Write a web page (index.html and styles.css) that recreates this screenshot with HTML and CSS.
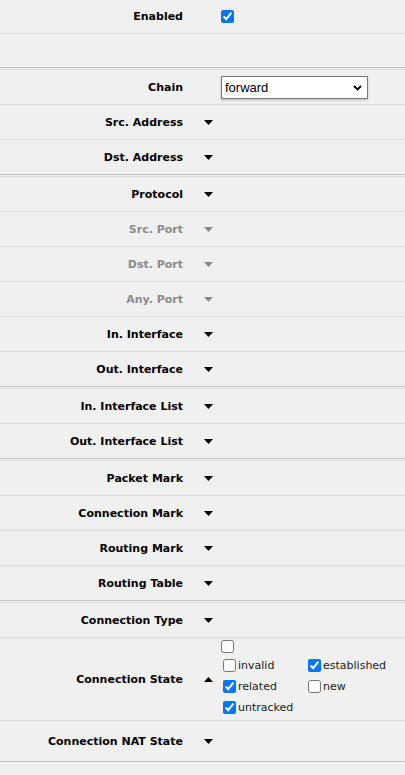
FILE: index.html
```html
<!DOCTYPE html>
<html lang="en">
<head>
    <meta charset="UTF-8">
    <meta name="viewport" content="width=device-width, initial-scale=1.0">
    <title>Firewall Rule</title>
    <link rel="stylesheet" href="styles.css">
</head>
<body>
    <div class="form">
        <div class="group">
            <div class="row row-first">
                <div class="label">Enabled</div>
                <div class="toggle"></div>
                <div class="value"><input type="checkbox" class="check" checked></div>
            </div>
            <div class="row row-empty"></div>
        </div>

        <div class="group">
            <div class="row">
                <div class="label">Chain</div>
                <div class="toggle"></div>
                <div class="value">
                    <div class="select-wrap">
                        <select class="select">
                            <option>forward</option>
                            <option>input</option>
                            <option>output</option>
                        </select>
                        <svg class="chevron" width="9" height="6" viewBox="0 0 9 6"><path d="M1 1 L4.5 4.5 L8 1" fill="none" stroke="#000" stroke-width="1.8"/></svg>
                    </div>
                </div>
            </div>
            <div class="row">
                <div class="label">Src. Address</div>
                <div class="toggle"><svg width="9" height="5" viewBox="0 0 9 5"><polygon points="0,0 9,0 4.5,5"/></svg></div>
            </div>
            <div class="row">
                <div class="label">Dst. Address</div>
                <div class="toggle"><svg width="9" height="5" viewBox="0 0 9 5"><polygon points="0,0 9,0 4.5,5"/></svg></div>
            </div>
        </div>

        <div class="group">
            <div class="row">
                <div class="label">Protocol</div>
                <div class="toggle"><svg width="9" height="5" viewBox="0 0 9 5"><polygon points="0,0 9,0 4.5,5"/></svg></div>
            </div>
            <div class="row disabled">
                <div class="label">Src. Port</div>
                <div class="toggle"><svg width="9" height="5" viewBox="0 0 9 5"><polygon points="0,0 9,0 4.5,5"/></svg></div>
            </div>
            <div class="row disabled">
                <div class="label">Dst. Port</div>
                <div class="toggle"><svg width="9" height="5" viewBox="0 0 9 5"><polygon points="0,0 9,0 4.5,5"/></svg></div>
            </div>
            <div class="row disabled">
                <div class="label">Any. Port</div>
                <div class="toggle"><svg width="9" height="5" viewBox="0 0 9 5"><polygon points="0,0 9,0 4.5,5"/></svg></div>
            </div>
            <div class="row">
                <div class="label">In. Interface</div>
                <div class="toggle"><svg width="9" height="5" viewBox="0 0 9 5"><polygon points="0,0 9,0 4.5,5"/></svg></div>
            </div>
            <div class="row">
                <div class="label">Out. Interface</div>
                <div class="toggle"><svg width="9" height="5" viewBox="0 0 9 5"><polygon points="0,0 9,0 4.5,5"/></svg></div>
            </div>
        </div>

        <div class="group">
            <div class="row">
                <div class="label">In. Interface List</div>
                <div class="toggle"><svg width="9" height="5" viewBox="0 0 9 5"><polygon points="0,0 9,0 4.5,5"/></svg></div>
            </div>
            <div class="row">
                <div class="label">Out. Interface List</div>
                <div class="toggle"><svg width="9" height="5" viewBox="0 0 9 5"><polygon points="0,0 9,0 4.5,5"/></svg></div>
            </div>
        </div>

        <div class="group">
            <div class="row">
                <div class="label">Packet Mark</div>
                <div class="toggle"><svg width="9" height="5" viewBox="0 0 9 5"><polygon points="0,0 9,0 4.5,5"/></svg></div>
            </div>
            <div class="row">
                <div class="label">Connection Mark</div>
                <div class="toggle"><svg width="9" height="5" viewBox="0 0 9 5"><polygon points="0,0 9,0 4.5,5"/></svg></div>
            </div>
            <div class="row">
                <div class="label">Routing Mark</div>
                <div class="toggle"><svg width="9" height="5" viewBox="0 0 9 5"><polygon points="0,0 9,0 4.5,5"/></svg></div>
            </div>
            <div class="row">
                <div class="label">Routing Table</div>
                <div class="toggle"><svg width="9" height="5" viewBox="0 0 9 5"><polygon points="0,0 9,0 4.5,5"/></svg></div>
            </div>
        </div>

        <div class="group">
            <div class="row">
                <div class="label">Connection Type</div>
                <div class="toggle"><svg width="9" height="5" viewBox="0 0 9 5"><polygon points="0,0 9,0 4.5,5"/></svg></div>
            </div>
            <div class="row row-state">
                <div class="label">Connection State</div>
                <div class="toggle"><svg width="9" height="5" viewBox="0 0 9 5"><polygon points="0,5 9,5 4.5,0"/></svg></div>
                <div class="value value-state">
                    <input type="checkbox" class="check check-all">
                    <div class="states">
                        <label class="state"><input type="checkbox"> invalid</label>
                        <label class="state"><input type="checkbox" checked> established</label>
                        <label class="state"><input type="checkbox" checked> related</label>
                        <label class="state"><input type="checkbox"> new</label>
                        <label class="state"><input type="checkbox" checked> untracked</label>
                    </div>
                </div>
            </div>
            <div class="row row-nat">
                <div class="label">Connection NAT State</div>
                <div class="toggle"><svg width="9" height="5" viewBox="0 0 9 5"><polygon points="0,0 9,0 4.5,5"/></svg></div>
            </div>
        </div>
    </div>
</body>
</html>
```

FILE: styles.css
```css
body {
    margin: 0;
    padding: 0;
    background-color: #f0f0f0;
    font-family: 'DejaVu Sans', Verdana, sans-serif;
    color: #000;
    height: 775px;
    overflow: hidden;
}
.group {
    border-bottom: 1px solid #c4c4c4;
}
.group + .group {
    margin-top: 1px;
    border-top: 1px solid #dcdcdc;
}
.row {
    display: flex;
    align-items: center;
    height: 34px;
    border-bottom: 1px solid #dcdcdc;
}
.row:last-child {
    border-bottom: none;
}
.row-first, .row-empty {
    height: 33px;
}
.row-state {
    height: 82px;
}
.row-nat {
    height: 40px;
}
.label {
    width: 183px;
    flex: none;
    text-align: right;
    font-size: 11px;
    font-weight: bold;
}
.toggle {
    width: 17px;
    margin-left: 17px;
    flex: none;
    display: flex;
    justify-content: center;
    align-items: center;
}
.toggle svg {
    display: block;
    fill: #000;
}
.disabled .label {
    color: #8a8a8a;
}
.disabled .toggle svg {
    fill: #8a8a8a;
}
.value {
    display: flex;
    align-items: center;
}
.check {
    width: 13px;
    height: 13px;
    margin: 0 0 0 4px;
}
.select-wrap {
    position: relative;
    margin-left: 4px;
}
.select {
    appearance: none;
    -webkit-appearance: none;
    display: block;
    width: 147px;
    height: 23px;
    margin: 0;
    padding: 0 20px 0 3px;
    border: 1px solid #7a7a7a;
    border-radius: 0;
    background-color: #fff;
    box-shadow: 0 1px 2px rgba(0, 0, 0, 0.25);
    font-family: 'Liberation Sans', Arial, sans-serif;
    font-size: 13px;
    color: #000;
}
.chevron {
    position: absolute;
    right: 6px;
    top: 9px;
    pointer-events: none;
}
.value-state {
    flex-direction: column;
    align-items: flex-start;
    align-self: flex-start;
    padding-top: 2px;
}
.check-all {
    margin-left: 4px;
}
.states {
    display: grid;
    grid-template-columns: 85px 85px;
    grid-auto-rows: 21px;
    margin-top: 4px;
    margin-left: 6px;
}
.state {
    display: flex;
    align-items: flex-start;
    font-size: 11px;
    color: #222;
    line-height: 17px;
    white-space: nowrap;
}
.state input {
    width: 13px;
    height: 13px;
    margin: 2px 2px 0 0;
}
```
